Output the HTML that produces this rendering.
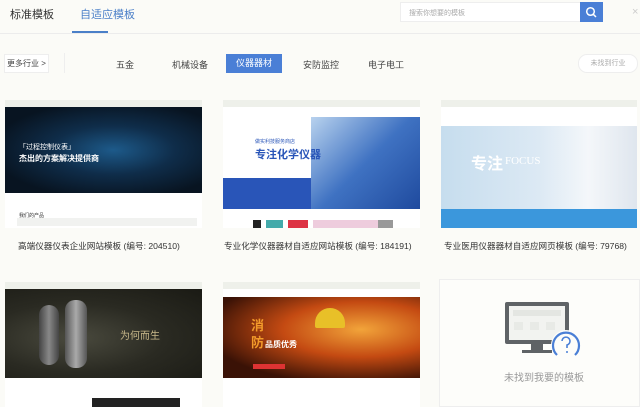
<!DOCTYPE html>
<html><head><meta charset="utf-8"><style>
*{margin:0;padding:0;box-sizing:border-box}
body{width:640px;height:407px;overflow:hidden;background:#fbfbf7;font-family:"Liberation Sans","Noto Sans CJK SC",sans-serif;position:relative;color:#444}
.a{position:absolute;white-space:nowrap}
.card{position:absolute;background:#fff;overflow:hidden}
.strip{position:absolute;left:0;right:0;top:0;height:7px;background:#eef0ea}
.img{position:absolute;left:0;right:0}
.cap{font-size:8.6px;color:#333}
</style></head><body>
<div class="a" style="left:10px;top:6px;font-size:11px;color:#333">标准模板</div>
<div class="a" style="left:80px;top:6px;font-size:11px;color:#4a7fc8">自适应模板</div>
<div class="a" style="left:0;top:33px;width:640px;height:1px;background:#ececec"></div>
<div class="a" style="left:72px;top:31px;width:36px;height:2px;background:#4a7fc8"></div>
<div class="a" style="left:400px;top:2px;width:181px;height:20px;background:#fff;border:1px solid #eee"></div>
<div class="a" style="left:409px;top:8px;font-size:7px;color:#aaa">搜索你想要的模板</div>
<div class="a" style="left:580px;top:2px;width:23px;height:20px;background:#4a7fd6"></div>
<svg class="a" style="left:585px;top:6px" width="13" height="13" viewBox="0 0 13 13"><circle cx="5.5" cy="5.5" r="3.8" stroke="#fff" stroke-width="1.5" fill="none"/><line x1="8.3" y1="8.3" x2="11" y2="11" stroke="#fff" stroke-width="1.5"/></svg>
<div class="a" style="left:632px;top:6px;font-size:11px;color:#ccc">×</div>

<div class="a" style="left:4px;top:54px;width:45px;height:19px;background:#fff;border:1px solid #eee;font-size:8px;color:#444;line-height:17px;text-align:center">更多行业 &gt;</div>
<div class="a" style="left:64px;top:53px;width:1px;height:20px;background:#eee"></div>
<div class="a" style="left:116px;top:58px;font-size:9px;color:#444">五金</div>
<div class="a" style="left:172px;top:58px;font-size:9px;color:#444">机械设备</div>
<div class="a" style="left:226px;top:54px;width:56px;height:19px;background:#4a7fd6;font-size:9px;color:#fff;line-height:19px;text-align:center">仪器器材</div>
<div class="a" style="left:303px;top:58px;font-size:9px;color:#444">安防监控</div>
<div class="a" style="left:368px;top:58px;font-size:9px;color:#444">电子电工</div>
<div class="a" style="left:578px;top:54px;width:60px;height:19px;border:1px solid #eee;border-radius:9px;background:#fff;font-size:7px;color:#aaa;line-height:17px;text-align:center">未找到行业</div>

<div class="card" style="left:5px;top:100px;width:197px;height:128px">
<div class="strip"></div>
<div class="img" style="top:7px;height:86px;background:radial-gradient(ellipse at 55% 50%,#1d5a8a 0%,#0f2d4a 40%,#081421 80%)"></div>
<div class="a" style="left:14px;top:42px;font-size:7px;color:#fff">「过程控制仪表」</div>
<div class="a" style="left:14px;top:53px;font-size:8px;color:#fff;font-weight:bold">杰出的方案解决提供商</div>
<div class="a" style="left:14px;top:112px;font-size:5px;color:#333">我们的产品</div>
<div class="a" style="left:12px;top:118px;width:180px;height:8px;background:#f1f2f0"></div>
</div>
<div class="card" style="left:223px;top:100px;width:197px;height:128px">
<div class="strip"></div>
<div class="a" style="left:0;top:78px;width:197px;height:31px;background:#2955b8"></div>
<div class="a" style="left:88px;top:17px;width:109px;height:92px;background:linear-gradient(135deg,#b8d2ee,#3f72c2 50%,#1f4a9e)"></div>
<div class="a" style="left:32px;top:46px;font-size:11px;color:#2955b8;font-weight:bold">专注化学仪器</div>
<div class="a" style="left:32px;top:38px;font-size:5px;color:#2955b8">做实利技服务商店</div>
<div class="a" style="left:30px;top:120px;width:140px;height:8px;background:linear-gradient(90deg,#222 0 8px,#fff 8px 13px,#4aa 13px 30px,#fff 30px 35px,#d34 35px 55px,#fff 55px 60px,#ecd 60px 125px,#999 125px)"></div>
</div>
<div class="card" style="left:441px;top:100px;width:196px;height:128px">
<div class="strip"></div>
<div class="img" style="top:26px;height:83px;background:linear-gradient(90deg,#c6ddee,#dce9f4 50%,#f4f7fa 75%,#dfe6ee)"></div>
<div class="a" style="left:30px;top:50px;font-size:16px;color:#fff;font-weight:bold">专注</div>
<div class="a" style="left:64px;top:55px;font-size:11px;color:#fff;font-family:'Liberation Serif',serif">FOCUS</div>
<div class="img" style="top:109px;height:24px;background:#3b97dc"></div>
</div>
<div class="a cap" style="left:18px;top:240px">高端仪器仪表企业网站模板 (编号: 204510)</div>
<div class="a cap" style="left:224px;top:240px">专业化学仪器器材自适应网站模板 (编号: 184191)</div>
<div class="a cap" style="left:444px;top:240px">专业医用仪器器材自适应网页模板 (编号: 79768)</div>

<div class="card" style="left:5px;top:282px;width:197px;height:125px">
<div class="strip"></div>
<div class="img" style="top:7px;height:89px;background:radial-gradient(ellipse at 35% 55%,#4a4a3e 0%,#2a2a22 50%,#1a1a14)"></div>
<div class="a" style="left:60px;top:18px;width:22px;height:68px;border-radius:10px;background:linear-gradient(90deg,#555,#aaa,#555)"></div>
<div class="a" style="left:34px;top:23px;width:20px;height:60px;border-radius:10px;background:linear-gradient(90deg,#444,#888,#444)"></div>
<div class="a" style="left:115px;top:45px;font-size:10px;color:#c8b88a">为何而生</div>
<div class="a" style="left:87px;top:116px;width:88px;height:9px;background:#222"></div>
</div>
<div class="card" style="left:223px;top:282px;width:197px;height:125px">
<div class="strip"></div>
<div class="img" style="top:15px;height:81px;background:radial-gradient(ellipse at 70% 40%,#f2a43a 0%,#c44a12 40%,#3a1206 80%)"></div>
<div class="a" style="left:92px;top:26px;width:30px;height:20px;border-radius:15px 15px 2px 2px;background:#e8c028"></div>
<div class="a" style="left:28px;top:35px;font-size:13px;color:#f29a2a;font-weight:bold;line-height:17px">消<br>防</div>
<div class="a" style="left:42px;top:57px;font-size:8px;color:#fff;font-weight:bold">品质优秀</div>
<div class="a" style="left:30px;top:82px;width:32px;height:5px;background:#d33"></div>
</div>
<div class="a" style="left:439px;top:279px;width:201px;height:128px;background:#fdfdfa;border:1px solid #eee"></div>
<svg class="a" style="left:500px;top:298px" width="90" height="66" viewBox="0 0 90 66">
<rect x="5" y="4" width="64" height="42" rx="2" fill="#5f6366"/>
<rect x="9" y="8" width="56" height="34" fill="#f2f3f0"/>
<rect x="13" y="12" width="48" height="6" fill="#e4e6e2"/>
<rect x="14" y="24" width="9" height="8" fill="#e8eae6"/><rect x="30" y="24" width="9" height="8" fill="#e8eae6"/><rect x="46" y="24" width="9" height="8" fill="#e8eae6"/>
<rect x="31" y="46" width="12" height="6" fill="#5f6366"/>
<rect x="22" y="52" width="30" height="3" fill="#5f6366"/>
<circle cx="66" cy="47" r="15" fill="#fdfdfa"/>
<path d="M57 57 A13 13 0 1 1 75 57" stroke="#4a7fd6" stroke-width="2.2" fill="none"/>
<path d="M62 43 a4 4 0 1 1 5 4 v3" stroke="#4a7fd6" stroke-width="1.6" fill="none"/>
<circle cx="67" cy="54" r="1" fill="#4a7fd6"/>
</svg>
<div class="a" style="left:504px;top:369px;font-size:10px;color:#999">未找到我要的模板</div>
</body></html>
